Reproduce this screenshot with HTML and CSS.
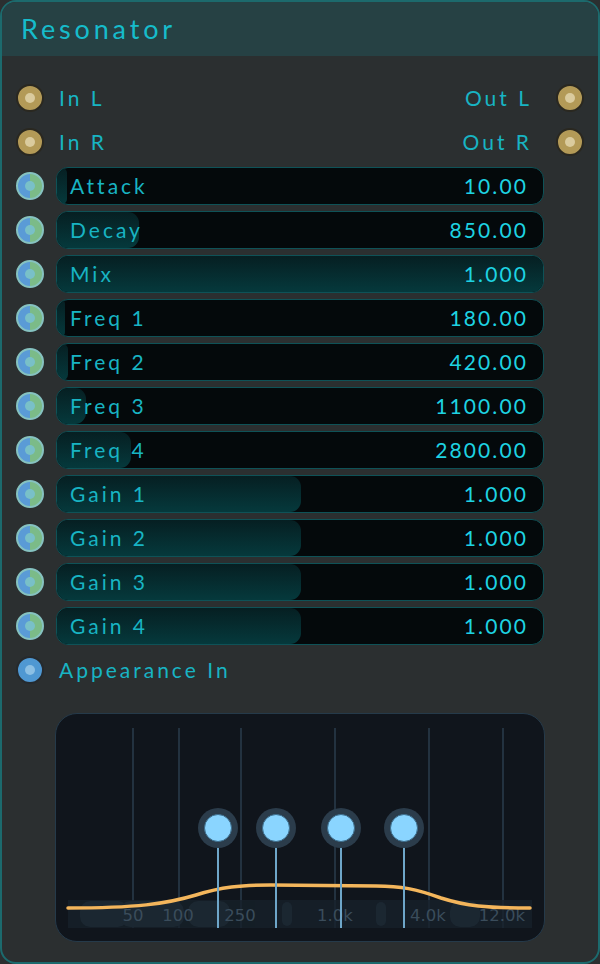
FILE: index.html
```html
<!DOCTYPE html>
<html>
<head>
<meta charset="utf-8">
<link rel="stylesheet" href="styles.css">
</head>
<body>
<div class="panel">
  <div class="header"><span class="title">Resonator</span></div>
  <div class="content">
    <div class="row">
      <span class="port audio"></span>
      <div class="io"><span class="lbl">In L</span><span class="lbl">Out L</span></div>
      <span class="port audio"></span>
    </div>
    <div class="row">
      <span class="port audio"></span>
      <div class="io"><span class="lbl">In R</span><span class="lbl">Out R</span></div>
      <span class="port audio"></span>
    </div>
    <div class="row">
      <span class="port param"></span>
      <div class="slider"><div class="fill" style="width:10px"></div><span class="name">Attack</span><span class="val">10.00</span></div>
    </div>
    <div class="row">
      <span class="port param"></span>
      <div class="slider"><div class="fill" style="width:82px"></div><span class="name">Decay</span><span class="val">850.00</span></div>
    </div>
    <div class="row">
      <span class="port param"></span>
      <div class="slider"><div class="fill" style="width:100%"></div><span class="name">Mix</span><span class="val">1.000</span></div>
    </div>
    <div class="row">
      <span class="port param"></span>
      <div class="slider"><div class="fill" style="width:8px"></div><span class="name">Freq 1</span><span class="val">180.00</span></div>
    </div>
    <div class="row">
      <span class="port param"></span>
      <div class="slider"><div class="fill" style="width:11px"></div><span class="name">Freq 2</span><span class="val">420.00</span></div>
    </div>
    <div class="row">
      <span class="port param"></span>
      <div class="slider"><div class="fill" style="width:29px"></div><span class="name">Freq 3</span><span class="val">1100.00</span></div>
    </div>
    <div class="row">
      <span class="port param"></span>
      <div class="slider"><div class="fill" style="width:74px"></div><span class="name">Freq 4</span><span class="val">2800.00</span></div>
    </div>
    <div class="row">
      <span class="port param"></span>
      <div class="slider"><div class="fill" style="width:244px"></div><span class="name">Gain 1</span><span class="val">1.000</span></div>
    </div>
    <div class="row">
      <span class="port param"></span>
      <div class="slider"><div class="fill" style="width:244px"></div><span class="name">Gain 2</span><span class="val">1.000</span></div>
    </div>
    <div class="row">
      <span class="port param"></span>
      <div class="slider"><div class="fill" style="width:244px"></div><span class="name">Gain 3</span><span class="val">1.000</span></div>
    </div>
    <div class="row">
      <span class="port param"></span>
      <div class="slider"><div class="fill" style="width:244px"></div><span class="name">Gain 4</span><span class="val">1.000</span></div>
    </div>
    <div class="row">
      <span class="port appear"></span>
      <div class="io"><span class="lbl">Appearance In</span></div>
    </div>
    <div class="eq">
      <svg class="eqsvg" width="488" height="227" viewBox="0 0 488 227">
        <g stroke="#2a3d4d" stroke-width="1.5">
          <line x1="77" y1="14" x2="77" y2="214"/>
          <line x1="123" y1="14" x2="123" y2="214"/>
          <line x1="185" y1="14" x2="185" y2="214"/>
          <line x1="279" y1="14" x2="279" y2="214"/>
          <line x1="373" y1="14" x2="373" y2="214"/>
          <line x1="447" y1="14" x2="447" y2="214"/>
        </g>
        <rect x="12" y="186" width="464" height="28" fill="#16202a" opacity="0.8"/>
        <g fill="#1c2833" opacity="0.9">
          <rect x="24" y="187" width="48" height="26" rx="10"/>
          <rect x="64" y="187" width="64" height="26" rx="10"/>
          <rect x="132" y="187" width="42" height="26" rx="10"/>
          <rect x="226" y="188" width="10" height="24" rx="5"/>
          <rect x="320" y="188" width="10" height="24" rx="5"/>
          <rect x="394" y="187" width="30" height="26" rx="10"/>
        </g>
        <g fill="#3a4c5b" font-family="DejaVu Sans, sans-serif" font-size="16.5" text-anchor="middle">
          <text x="77" y="207">50</text>
          <text x="122" y="207">100</text>
          <text x="184" y="207">250</text>
          <text x="279" y="207">1.0k</text>
          <text x="372" y="207">4.0k</text>
          <text x="446" y="207">12.0k</text>
        </g>
        <path d="M12,194 C80,194 110,190 140,181 C165,173 185,171 215,171 L320,172 C345,172 360,175 385,184 C410,192 430,194 474,194" fill="none" stroke="#f4b65c" stroke-width="3.5" stroke-linecap="round"/>
        <g stroke="#6ea6c9" stroke-width="2">
          <line x1="162" y1="126" x2="162" y2="214"/>
          <line x1="220" y1="126" x2="220" y2="214"/>
          <line x1="285" y1="126" x2="285" y2="214"/>
          <line x1="348" y1="126" x2="348" y2="214"/>
        </g>
        <g>
          <circle cx="162" cy="114" r="20" fill="#2b3c4b"/>
          <circle cx="220" cy="114" r="20" fill="#2b3c4b"/>
          <circle cx="285" cy="114" r="20" fill="#2b3c4b"/>
          <circle cx="348" cy="114" r="20" fill="#2b3c4b"/>
        </g>
        <g fill="#8ad5ff" stroke="#3d6d8c" stroke-width="1">
          <circle cx="162" cy="114" r="13.5"/>
          <circle cx="220" cy="114" r="13.5"/>
          <circle cx="285" cy="114" r="13.5"/>
          <circle cx="348" cy="114" r="13.5"/>
        </g>
      </svg>
    </div>
  </div>
</div>
</body>
</html>
```
FILE: styles.css
```css
html, body {
  margin: 0;
  padding: 0;
  background: #2b2f30;
}
.panel {
  box-sizing: border-box;
  width: 600px;
  height: 964px;
  border: 2px solid #1c6a6d;
  border-radius: 16px;
  background: #2b2f30;
  overflow: hidden;
  font-family: Lato, "Open Sans", sans-serif;
}
.header {
  box-sizing: border-box;
  height: 54px;
  background: #264144;
  display: flex;
  align-items: center;
  padding: 0 0 2px 19px;
}
.title {
  color: #16bccb;
  font-size: 27px;
  letter-spacing: 3.85px;
}
.content {
  padding: 20px 14px 0 14px;
  display: flex;
  flex-direction: column;
}
.row {
  height: 44px;
  display: grid;
  grid-template-columns: 28px 488px 28px;
  column-gap: 12px;
  align-items: center;
}
.port {
  box-sizing: border-box;
  width: 28px;
  height: 28px;
  border-radius: 50%;
  display: flex;
  align-items: center;
  justify-content: center;
}
.port::after {
  content: "";
  width: 10px;
  height: 10px;
  border-radius: 50%;
}
.audio {
  background: #b39a57;
  border: 2px solid #2a2820;
}
.audio::after { background: #dacb9e; }
.param {
  background: linear-gradient(to right, #5a9bd6 50%, #7bbb88 50%);
  border: 2px solid #86c2c0;
}
.param::after { background: #79c0c8; }
.appear {
  background: #4f98d2;
  border: 2px solid #252a2e;
}
.appear::after { background: #8cc0e4; }
.io {
  display: flex;
  justify-content: space-between;
  padding: 0 12px 2px 3px;
}
.lbl {
  color: #18b4c3;
  font-size: 21px;
  letter-spacing: 3px;
}
.slider {
  position: relative;
  box-sizing: border-box;
  height: 38px;
  border: 1px solid #0e5257;
  border-radius: 12px;
  background: #04090b;
  overflow: hidden;
  display: flex;
  align-items: center;
  justify-content: space-between;
  padding: 0 15px 2px 13px;
}
.fill {
  position: absolute;
  left: 0;
  top: 0;
  bottom: 0;
  border-radius: 11px;
  background: linear-gradient(to bottom, #061f22, #05393c);
}
.name, .val {
  position: relative;
  font-size: 21px;
}
.name { color: #18b4c3; letter-spacing: 3px; }
.val { color: #1ed3e2; letter-spacing: 2.1px; }
.eq {
  box-sizing: border-box;
  margin: 21px 39px 0 39px;
  height: 229px;
  border: 1px solid #253a4a;
  border-radius: 22px;
  background: #10151c;
  overflow: hidden;
}
.eqsvg { display: block; }
```
